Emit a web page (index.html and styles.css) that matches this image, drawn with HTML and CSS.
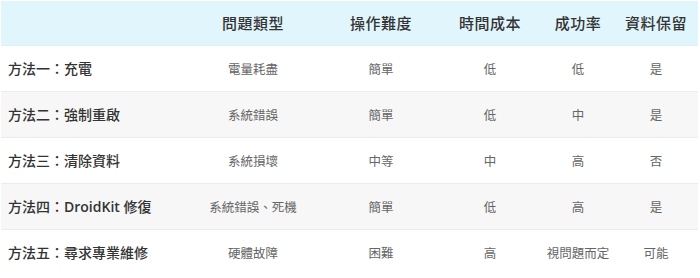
FILE: index.html
```html
<!DOCTYPE html>
<html lang="zh-Hant">
<head>
<meta charset="utf-8">
<link rel="stylesheet" href="styles.css">
</head>
<body>
<div class="wrap">
<table class="cmp">
<colgroup>
<col class="c1"><col class="c2"><col class="c3"><col class="c4"><col class="c5"><col class="c6">
</colgroup>
<thead>
<tr><th></th><th>問題類型</th><th>操作難度</th><th>時間成本</th><th>成功率</th><th>資料保留</th></tr>
</thead>
<tbody>
<tr><td class="m">方法一：充電</td><td>電量耗盡</td><td>簡單</td><td>低</td><td>低</td><td>是</td></tr>
<tr class="alt"><td class="m">方法二：強制重啟</td><td>系統錯誤</td><td>簡單</td><td>低</td><td>中</td><td>是</td></tr>
<tr><td class="m">方法三：清除資料</td><td>系統損壞</td><td>中等</td><td>中</td><td>高</td><td>否</td></tr>
<tr class="alt"><td class="m">方法四：<span class="lat">DroidKit</span> 修復</td><td>系統錯誤、死機</td><td>簡單</td><td>低</td><td>高</td><td>是</td></tr>
<tr><td class="m">方法五：尋求專業維修</td><td>硬體故障</td><td>困難</td><td>高</td><td>視問題而定</td><td>可能</td></tr>
</tbody>
</table>
</div>
</body>
</html>
```

FILE: styles.css
```css
html, body {
  margin: 0;
  padding: 0;
  background: #ffffff;
}
.wrap {
  padding: 1px 2px 0 1px;
  font-family: "Open Sans", "Noto Sans CJK TC", sans-serif;
}
.cmp {
  width: 697px;
  border-collapse: collapse;
  table-layout: fixed;
}
.c1 { width: 181px; }
.c2 { width: 142px; }
.c3 { width: 114px; }
.c4 { width: 104px; }
.c5 { width: 72px; }
.c6 { width: 84px; }
.cmp thead tr {
  background: #e1f5fd;
  height: 44px;
  border-bottom: 1px solid #e4eef2;
}
.cmp th {
  font-size: 15px;
  font-weight: 500;
  color: #333;
  text-align: center;
  padding: 0;
  letter-spacing: 0.5px;
}
.cmp tbody tr {
  height: 46px;
  border-bottom: 1px solid #ececec;
}
.cmp tbody tr:last-child {
  border-bottom: none;
}
.cmp tbody tr.alt {
  background: #f7f7f7;
}
.cmp td {
  font-size: 12.5px;
  color: #666;
  text-align: center;
  padding: 0;
  white-space: nowrap;
}
.cmp td.m {
  text-align: left;
  padding-left: 7px;
  font-size: 14px;
  font-weight: 500;
  color: #333;
}
.cmp td.m .lat {
  font-weight: 600;
}
```
